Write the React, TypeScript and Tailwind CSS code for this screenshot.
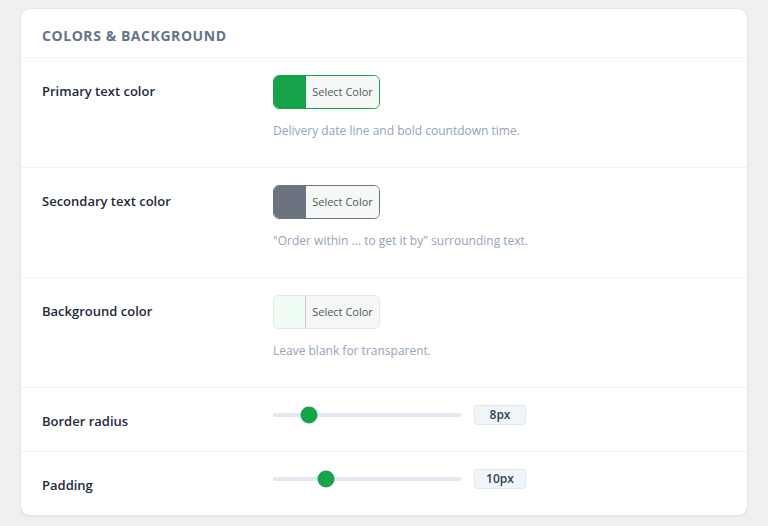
import React from 'react';

const colorRows = [
  {
    label: 'Primary text color',
    swatch: 'bg-[#16a34a]',
    border: 'border-[#16a34a]',
    divider: 'border-[#16a34a]',
    help: 'Delivery date line and bold countdown time.',
  },
  {
    label: 'Secondary text color',
    swatch: 'bg-[#6b7280]',
    border: 'border-[#6b7280]',
    divider: 'border-[#6b7280]',
    help: '"Order within ... to get it by" surrounding text.',
  },
  {
    label: 'Background color',
    swatch: 'bg-[#f0fdf4]',
    border: 'border-[#e2e8e4]',
    divider: 'border-[#c9ccce]',
    help: 'Leave blank for transparent.',
  },
];

// pos = where the thumb sits along the track, in %
const sliderRows = [
  { label: 'Border radius', value: 8, pos: 19 },
  { label: 'Padding', value: 10, pos: 27.8 },
];

function ColorButton({ swatch, border, divider }: { swatch: string; border: string; divider: string }) {
  return (
    <div className={`flex h-[34px] w-[107px] overflow-hidden rounded-[6px] border ${border}`}>
      <div className={`w-[31px] ${swatch}`} />
      <div className={`flex flex-1 items-center justify-center border-l bg-[#f6f7f7] text-[11px] text-[#50575e] ${divider}`}>
        Select Color
      </div>
    </div>
  );
}

function Slider({ value, pos }: { value: number; pos: number }) {
  return (
    <div className="flex h-[20px] items-center gap-[12px]">
      <div className="relative h-[4px] w-[189px] rounded-full bg-[#e2e8f0]">
        <div
          className="absolute top-1/2 h-[17px] w-[17px] -translate-x-1/2 -translate-y-1/2 rounded-full bg-[#16a34a]"
          style={{ left: `${pos}%` }}
        />
      </div>
      <div className="flex h-[20px] w-[52px] items-center justify-center rounded-[3px] border border-[#e2e8f0] bg-[#f1f5f9] text-[12px] font-semibold text-[#334155]">
        {value}px
      </div>
    </div>
  );
}

export default function App() {
  return (
    <div className="min-h-[526px] bg-[#f0f0f0] px-[20px] pt-[8px] pb-[10px] font-['Open_Sans',_'Noto_Sans',_sans-serif]">
      <div className="overflow-hidden rounded-[10px] border border-[#e4e5e8] bg-white shadow-[0_1px_2px_rgba(0,0,0,0.05)]">
        <div className="flex h-[49px] items-center border-b border-[#f1f2f4] px-[21px] pt-[4px]">
          <h2 className="text-[14px] font-bold tracking-[0.04em] text-[#64748b]">COLORS &amp; BACKGROUND</h2>
        </div>

        {colorRows.map((row) => (
          <div key={row.label} className="flex border-b border-[#f1f2f4] px-[21px] pt-[17px] pb-[27px]">
            <div className="w-[231px] pt-[7px] text-[13px] font-semibold text-[#1e293b]">{row.label}</div>
            <div className="flex flex-col gap-[13px]">
              <ColorButton swatch={row.swatch} border={row.border} divider={row.divider} />
              <p className="text-[12px] text-[#94a3b8]">{row.help}</p>
            </div>
          </div>
        ))}

        {sliderRows.map((row, i) => (
          <div
            key={row.label}
            className={`flex px-[21px] pt-[17px] pb-[20px] ${i === 0 ? 'border-b border-[#f1f2f4]' : ''}`}
          >
            <div className="w-[231px] pt-[6px] text-[13px] leading-[20px] font-semibold text-[#1e293b]">{row.label}</div>
            <Slider value={row.value} pos={row.pos} />
          </div>
        ))}
      </div>
    </div>
  );
}
